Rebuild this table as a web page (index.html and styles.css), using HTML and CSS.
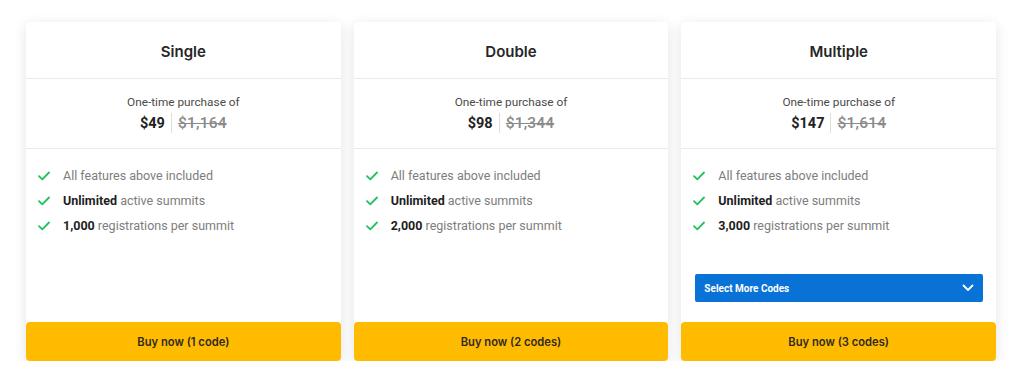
FILE: index.html
```html
<!DOCTYPE html>
<html lang="en">
<head>
<meta charset="utf-8">
<link rel="stylesheet" href="styles.css">
</head>
<body>
<div class="plans">
  <div class="card">
    <div class="card-head">Single</div>
    <div class="price">
      <div class="price-label">One-time purchase of</div>
      <div class="price-row"><span class="now">$49</span><span class="sep"></span><span class="was">$1,164</span></div>
    </div>
    <ul class="features">
      <li><svg class="check" viewBox="0 0 12 10"><path d="M1 5.2l3.3 3.2L11 1.5"/></svg><span>All features above included</span></li>
      <li><svg class="check" viewBox="0 0 12 10"><path d="M1 5.2l3.3 3.2L11 1.5"/></svg><span><b>Unlimited</b> active summits</span></li>
      <li><svg class="check" viewBox="0 0 12 10"><path d="M1 5.2l3.3 3.2L11 1.5"/></svg><span><b>1,000</b> registrations per summit</span></li>
    </ul>
    <button class="buy">Buy now (1 code)</button>
  </div>
  <div class="card">
    <div class="card-head">Double</div>
    <div class="price">
      <div class="price-label">One-time purchase of</div>
      <div class="price-row"><span class="now">$98</span><span class="sep"></span><span class="was">$1,344</span></div>
    </div>
    <ul class="features">
      <li><svg class="check" viewBox="0 0 12 10"><path d="M1 5.2l3.3 3.2L11 1.5"/></svg><span>All features above included</span></li>
      <li><svg class="check" viewBox="0 0 12 10"><path d="M1 5.2l3.3 3.2L11 1.5"/></svg><span><b>Unlimited</b> active summits</span></li>
      <li><svg class="check" viewBox="0 0 12 10"><path d="M1 5.2l3.3 3.2L11 1.5"/></svg><span><b>2,000</b> registrations per summit</span></li>
    </ul>
    <button class="buy">Buy now (2 codes)</button>
  </div>
  <div class="card">
    <div class="card-head">Multiple</div>
    <div class="price">
      <div class="price-label">One-time purchase of</div>
      <div class="price-row"><span class="now">$147</span><span class="sep"></span><span class="was">$1,614</span></div>
    </div>
    <ul class="features">
      <li><svg class="check" viewBox="0 0 12 10"><path d="M1 5.2l3.3 3.2L11 1.5"/></svg><span>All features above included</span></li>
      <li><svg class="check" viewBox="0 0 12 10"><path d="M1 5.2l3.3 3.2L11 1.5"/></svg><span><b>Unlimited</b> active summits</span></li>
      <li><svg class="check" viewBox="0 0 12 10"><path d="M1 5.2l3.3 3.2L11 1.5"/></svg><span><b>3,000</b> registrations per summit</span></li>
    </ul>
    <div class="select">
      <span>Select More Codes</span>
      <svg class="chev" viewBox="0 0 12 8"><path d="M1.5 1.5L6 6l4.5-4.5"/></svg>
    </div>
    <button class="buy">Buy now (3 codes)</button>
  </div>
</div>
</body>
</html>
```

FILE: styles.css
```css
* { box-sizing: border-box; }
html, body { margin: 0; background: #fff; }
body {
  padding: 22px 28px 0 26px;
  font-family: Roboto, "Liberation Sans", sans-serif;
  color: #222;
}
.plans {
  display: flex;
  gap: 13px;
}
.card {
  flex: 1;
  height: 339px;
  background: #fff;
  display: flex;
  flex-direction: column;
  box-shadow: 0 3px 14px rgba(0, 0, 0, 0.11);
  border-radius: 4px;
}
.card-head {
  height: 57px;
  border-bottom: 1px solid #e9e9ef;
  display: flex;
  align-items: center;
  justify-content: center;
  font-family: Inter, Roboto, sans-serif;
  font-size: 15px;
  font-weight: 600;
  color: #262626;
  padding-top: 2px;
}
.price {
  padding: 14px 0 13px;
  border-bottom: 1px solid #e9e9ef;
  text-align: center;
}
.price-label {
  font-size: 11.8px;
  line-height: 18px;
  color: #4a4a4a;
}
.price-row {
  display: flex;
  justify-content: center;
  align-items: center;
  height: 24px;
  font-size: 14px;
}
.now { font-weight: 700; color: #222; font-size: 14.5px; }
.sep {
  width: 1px;
  height: 20px;
  background: #dedede;
  margin: 0 6px 0 6px;
}
.was {
  color: #8a8a8a;
  text-decoration: line-through;
  font-weight: 500;
  font-size: 15.5px;
  letter-spacing: 0.2px;
}
.features {
  list-style: none;
  margin: 0;
  padding: 14px 0 0 12px;
}
.features li {
  display: flex;
  align-items: center;
  height: 25px;
  font-size: 12.5px;
  color: #7d7d7d;
}
.features b { color: #1e1e1e; font-weight: 700; }
.check {
  width: 12px;
  height: 10px;
  margin: 0 13px 0 0;
  fill: none;
  stroke: #22c15e;
  stroke-width: 1.8;
  stroke-linecap: round;
  stroke-linejoin: round;
}
.select {
  margin: 36px 13px 0 14px;
  height: 28px;
  border-radius: 2px;
  background: #0872d6;
  color: #fff;
  display: flex;
  align-items: center;
  justify-content: space-between;
  padding: 0 9px 0 9px;
  font-family: Roboto, sans-serif;
  font-size: 10px;
  font-weight: 700;
}
.chev {
  width: 12px;
  height: 8px;
  fill: none;
  stroke: #fff;
  stroke-width: 1.8;
  stroke-linecap: round;
  stroke-linejoin: round;
}
.buy {
  margin-top: auto;
  height: 39px;
  border: 0;
  border-radius: 4px;
  background: #ffbb00;
  color: #2e2a22;
  font-family: Inter, Roboto, sans-serif;
  font-size: 11.2px;
  font-weight: 600;
  cursor: pointer;
}
```
